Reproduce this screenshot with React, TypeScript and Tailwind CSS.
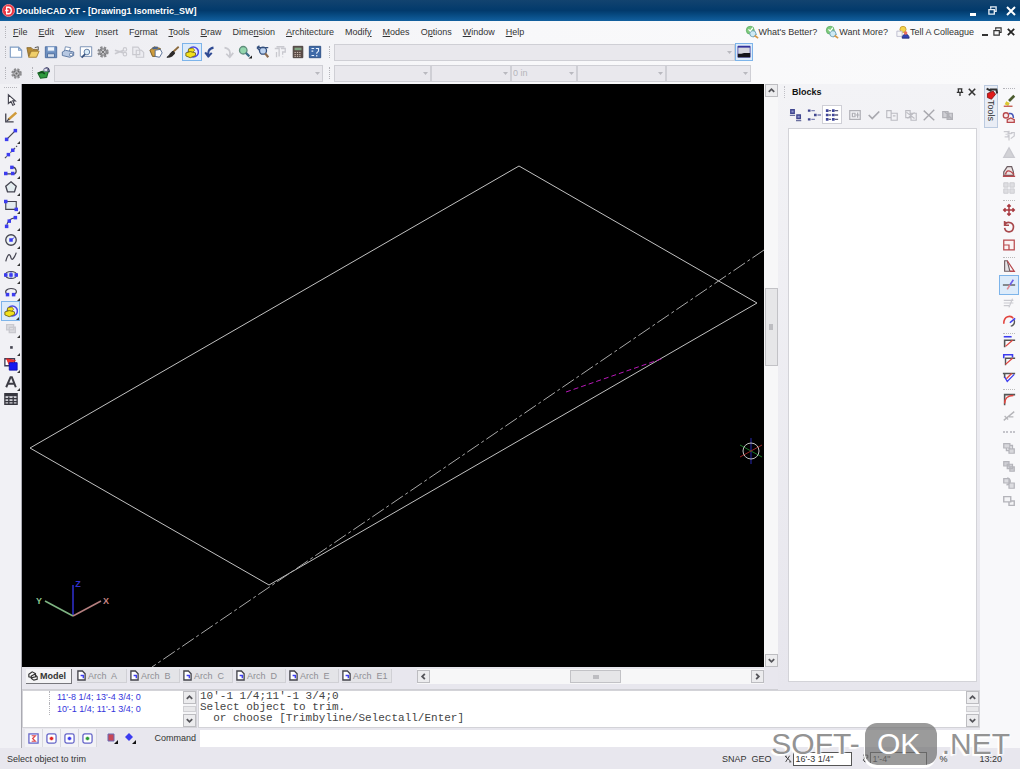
import type { ReactNode } from "react";

const MENUS = [
  ["", "F", "ile"],
  ["", "E", "dit"],
  ["", "V", "iew"],
  ["", "I", "nsert"],
  ["F", "o", "rmat"],
  ["", "T", "ools"],
  ["", "D", "raw"],
  ["Dime", "n", "sion"],
  ["", "A", "rchitecture"],
  ["Modif", "y", ""],
  ["", "M", "odes"],
  ["O", "p", "tions"],
  ["", "W", "indow"],
  ["", "H", "elp"],
];

const BLUE = "#3c3cf0";
const DARK = "#444450";
const PALE = "#c9c9cf";
const RED = "#b8484c";

const node = (x: number, y: number) => <rect x={x - 2} y={y - 2} width="4" height="4" fill={BLUE} stroke="none" />;

// all glyphs are drawn on a 16x16 grid, fill none and stroke by default
const ICONS: Record<string, ReactNode> = {
  new: <path d="M1.500 2.500H11L14.500 6V14H1.500ZM11 2.500V6H14.500" fill="#fff" stroke="#7f9dc4" strokeWidth="1.300" />,
  open: (
    <>
      <path d="M1 3H6L8 5H13V8H5L3 13Z" fill="#b58a34" stroke="#8a6a2e" />
      <path d="M3 14L6 7H15L12 14Z" fill="#f0cf6a" stroke="#a07a30" />
      <path d="M10 3L14 2V6" stroke="#444" />
    </>
  ),
  save: (
    <>
      <path d="M1.500 2H14.500V14.500H1.500Z" fill="#6c8fc0" stroke="#496a9d" />
      <path d="M4 2H12V7H4Z" fill="#eef4fc" stroke="#7d9bc8" />
      <path d="M4 10H12V14H4Z" fill="#d5deeb" stroke="#496a9d" />
    </>
  ),
  print: (
    <>
      <path d="M5 2L11 3L9 8L4 7Z" fill="#fff" stroke="#6d87ad" />
      <path d="M1.500 8L5 6L14.500 8V12L10 14L1.500 12Z" fill="#b7c8e2" stroke="#53709c" />
      <circle cx="11.500" cy="11" r="1.800" fill="#fff" stroke="#53709c" />
    </>
  ),
  preview: (
    <>
      <path d="M1.500 2H14.500V13H1.500Z" fill="#fff" stroke="#6d87ad" />
      <circle cx="9" cy="8" r="3.200" fill="#d9ecf8" stroke="#53709c" />
      <path d="M7 10.500L3 14.500" stroke="#39537f" strokeWidth="2" />
    </>
  ),
  gear: (
    <>
      <circle cx="8" cy="8" r="5" fill="#a9a9ac" stroke="#8b8b8e" strokeWidth="3" strokeDasharray="2.400 1.600" />
      <path d="M5 5L11 11M11 5L5 11" stroke="#6c6c70" strokeWidth="1.500" />
      <circle cx="8" cy="8" r="1.800" fill="#666" stroke="#d5d5d8" />
    </>
  ),
  cut: (
    <>
      <path d="M1 6L11 9M1 10L11 6" stroke={PALE} strokeWidth="1.800" />
      <circle cx="12.500" cy="10.500" r="2" stroke={PALE} strokeWidth="1.300" />
      <circle cx="12.500" cy="5" r="2" stroke={PALE} strokeWidth="1.300" />
    </>
  ),
  copy: <path d="M2 2.500H8L10 5V11H2ZM6 6H12L14.500 8.500V14H6Z" fill="#ececf1" stroke={PALE} strokeWidth="1.300" />,
  paste: (
    <>
      <path d="M1 6L6 2L13 4L11 13L4 13Z" fill="#cf9c3c" stroke="#6e5523" />
      <path d="M7 6L13 5L15 9L12 14L7 13Z" fill="#fff" stroke="#4a648e" />
      <path d="M4 4L10 3" stroke="#4a648e" strokeWidth="2.500" />
    </>
  ),
  brush: (
    <>
      <path d="M8 8L14.500 2" stroke="#8b6a3e" strokeWidth="2" />
      <path d="M1 14C4 13 4 9 8 7L10 9C8 13 5 14 1 14Z" fill="#2d2a2a" stroke="#222" />
    </>
  ),
  erase: (
    <>
      <circle cx="9.500" cy="8" r="5.800" fill="#e8eaff" stroke="#4a46e6" strokeWidth="1.700" />
      <path d="M4 4.500L9 3.500L11 6L9 8.500L4 8Z" fill="#f3e11c" stroke="#857a1c" />
      <path d="M1 9L6 7.500L12 9V12L6 14.500L1 12.500Z" fill="#f3e11c" stroke="#6b6218" />
    </>
  ),
  undo: <path d="M6.500 14C5 9 6 4 12 3M2.500 8.500L6 13L10 9" stroke="#2f4a93" strokeWidth="2.400" />,
  redo: <path d="M4 3C10 4 11 8 10 13M6 10L10 14L14 9" stroke={PALE} strokeWidth="2" />,
  zoom: (
    <>
      <circle cx="6" cy="6" r="4.300" fill="#93d6ad" stroke="#5f8d7b" strokeWidth="1.500" />
      <path d="M9 9L13 13" stroke="#3b6e86" strokeWidth="2.500" />
      <path d="M12 15.500H16V12Z" fill="#222" stroke="none" />
    </>
  ),
  zoomPrev: (
    <>
      <circle cx="8" cy="6.500" r="4" fill="#bcd2f0" stroke="#35507e" strokeWidth="1.500" />
      <path d="M10.500 9.500L14 14" stroke="#8c6a4e" strokeWidth="2.500" />
      <path d="M1 3H14M1 3L4 1M1 3L4 6" stroke="#35507e" strokeWidth="1.500" />
    </>
  ),
  help: <path d="M2 4H7V13M4 8V14M9 4H14V8H11V11M11 13V14M4 2H13" stroke={PALE} strokeWidth="1.500" />,
  calc: (
    <>
      <path d="M2.500 1.500H13.500V14.500H2.500Z" fill="#5b4a46" stroke="#443a38" />
      <path d="M4 3H12V6H4Z" fill="#7fa281" stroke="none" />
      <path d="M4 8.500H12M4 11H12M4 13H12" stroke="#e3d8cc" strokeDasharray="1.500 1.200" />
    </>
  ),
  palette: (
    <>
      <path d="M1.500 1.500H14.500V14.500H1.500Z" fill="#3f6aa8" stroke="#274a80" />
      <path d="M4 4H7M4 7H6M4 12H7M9 4H12V7L10 9V10M10 11.500V13" stroke="#e8f1fd" strokeWidth="1.300" />
    </>
  ),
  layers: (
    <>
      <path d="M1 8L6 6H13L11 13L4 14Z" fill="#2e9a3e" stroke="#1d6b2b" strokeWidth="1.300" />
      <path d="M2 8L6 7L9 9" stroke="#124a1c" strokeWidth="2" />
      <path d="M8 5C9 1 14 1 14 7" stroke="#33345e" strokeWidth="1.500" />
      <path d="M8 3H12V6H8Z" fill="#f2f2f6" stroke="#77779a" />
    </>
  ),
  screen: (
    <>
      <path d="M1 1.500H15V14H1Z" fill="#d6d7de" stroke="#4f4fae" />
      <path d="M1 2H15" stroke="#33339c" strokeWidth="2" />
      <path d="M1 14V10H5L8 9H15V14Z" fill="#15151a" stroke="none" />
    </>
  ),
  arrow: <path d="M5 2V12L8 9.500L10 14L12 13L10 9H13Z" fill="#fff" stroke={DARK} strokeWidth="1.300" />,
  sketch: (
    <>
      <path d="M2 4V13.500H11" stroke={DARK} strokeWidth="1.500" />
      <path d="M5 11L14 3" stroke="#d09b3a" strokeWidth="3" />
      <path d="M3 13L6 10" stroke={DARK} strokeWidth="1.500" />
    </>
  ),
  line: <><path d="M3 13L13 3" stroke={DARK} strokeWidth="1.500" />{node(3, 13)}{node(13, 3)}</>,
  cline: <><path d="M1 15L15 1" stroke={DARK} strokeWidth="1.200" strokeDasharray="3 1.500" />{node(5, 11)}{node(10, 6)}</>,
  pline: <><path d="M2 12.500H11C16 12 14 4 9 5" stroke={DARK} strokeWidth="1.500" />{node(2, 12)}{node(10, 12)}{node(9, 5)}</>,
  polygon: <path d="M8 2L14 7L12 13.500H4L2 7Z" fill="#e3ecef" stroke={DARK} strokeWidth="1.500" />,
  rect: <><path d="M2 4H14V13H2Z" fill="#e3ecef" stroke={DARK} strokeWidth="1.300" />{node(2, 4)}{node(14, 13)}</>,
  arc: <><path d="M3 14C3 8 7 4 13 3" stroke={DARK} strokeWidth="1.300" />{node(3, 13)}{node(6, 7)}{node(13, 3)}</>,
  circle: <><circle cx="8" cy="8" r="6" fill="#edf3f5" stroke={DARK} strokeWidth="1.500" />{node(8, 8)}<path d="M8 8L12 5" stroke={BLUE} /></>,
  spline: <path d="M2 13C5 2 7 5 8 9S12 9 14 3" stroke={DARK} strokeWidth="1.400" />,
  ellipse: <><ellipse cx="8" cy="8" rx="6.500" ry="4" fill="#e3ecef" stroke={DARK} strokeWidth="1.300" />{node(2, 8)}{node(8, 8)}{node(14, 8)}<path d="M8 4V12" stroke={BLUE} /></>,
  earc: <><path d="M4 11C-1 7 4 4 8 4C15 4 16 9 11 11" stroke={DARK} strokeWidth="1.400" />{node(4, 11)}{node(11, 11)}</>,
  block: <path d="M3 3H11V9H3ZM6 6H13V12H6Z" fill="#dedee2" stroke={PALE} strokeWidth="1.500" />,
  point: <path d="M7 7H10V10H7Z" fill={DARK} stroke="none" />,
  fill: (
    <>
      <path d="M1 2H12V10H1Z" fill="#fff" stroke="#3d3d57" strokeWidth="1.500" />
      <path d="M3 2L13 4L6 9Z" fill="#f03a34" stroke="#e02020" />
      <path d="M6 6.500H15V15H6Z" fill="#1818f0" stroke="#1010b0" />
    </>
  ),
  text: <path d="M2.500 14L7.500 2.500H9L13.500 14M4.500 10H12" stroke="#3d3d45" strokeWidth="2.300" />,
  table: (
    <>
      <path d="M1 2H15V14H1Z" fill="#d0d0d6" stroke="#36363e" strokeWidth="1.500" />
      <path d="M1 3.500H15" stroke="#36363e" strokeWidth="2.500" />
      <path d="M1 7.500H15M1 11H15M5.500 5V14M10.500 5V14" stroke="#36363e" strokeWidth="1.500" />
    </>
  ),
  pencil: (
    <>
      <path d="M8 8L14 2" stroke="#4a5a2e" strokeWidth="3" />
      <path d="M4 10L8 12" stroke="#dbc832" strokeWidth="4" />
      <path d="M2 14H12" stroke="#c25548" strokeWidth="1.500" />
    </>
  ),
  copyObj: (
    <>
      <circle cx="4.500" cy="5" r="3" fill="#f9eaea" stroke={RED} strokeWidth="1.500" />
      <path d="M6 13V10L10 8L14 10V13Z" fill="#f4dada" stroke={RED} strokeWidth="1.500" />
      <path d="M8 3C12 2 13 5 13 8" stroke="#4758b8" strokeWidth="1.800" />
    </>
  ),
  mirrorOff: <path d="M2 3H7V9H3M8 2V13M10 4H14V8L10 11M4 6L12 5" stroke={PALE} strokeWidth="1.400" />,
  mirror: <path d="M8 2L14 13H2Z" fill="#d2d2d6" stroke={PALE} strokeWidth="1.500" />,
  offset: (
    <>
      <path d="M2 13V9L6 3H11L13 9V13Z" fill="#ece4e4" stroke="#6d5d62" strokeWidth="1.400" />
      <path d="M4 12C5 7 8 6 14 12M1 14H15" stroke={RED} strokeWidth="1.600" />
    </>
  ),
  array: <path d="M2 2H7V7H2ZM9 2H14V7H9ZM2 9H7V14H2ZM9 9H14V14H9Z" fill="#dedee2" stroke={PALE} />,
  move: <path d="M8 1.500V14.500M1.500 8H14.500M6 4L8 2L10 4M6 12L8 14L10 12M4 6L2 8L4 10M12 6L14 8L12 10" stroke="#a8383e" strokeWidth="1.700" />,
  rotate: <path d="M3 5C7 0 14 4 13 9C12 15 4 15 3 9M3 1V6H8" stroke="#a8484c" strokeWidth="1.900" />,
  scale: <path d="M2 2.500H14V13.500H2ZM2 8H8V13.500" fill="#fbf3f3" stroke={RED} strokeWidth="1.400" />,
  stretch: (
    <>
      <path d="M3 14V2H6L9 14Z" fill="#e6e3e6" stroke="#6d5d62" strokeWidth="1.300" />
      <path d="M6 2L14 14H9" stroke={RED} strokeWidth="1.500" />
    </>
  ),
  trim: (
    <>
      <path d="M1 8H15" stroke="#555" strokeWidth="1.500" />
      <path d="M13 2L9 8" stroke="#6a5ce8" strokeWidth="1.800" />
      <path d="M9 8L6 13" stroke="#e28a92" strokeWidth="1.800" />
    </>
  ),
  extendOff: <path d="M2 5H13M2 8H13M2 11H8M12 3L8 13" stroke={PALE} strokeWidth="1.400" />,
  breakLine: (
    <>
      <path d="M2 11C2 2 10 1 13 5" stroke="#e2453f" strokeWidth="1.800" />
      <path d="M15 5L9 10" stroke={BLUE} strokeWidth="1.800" />
      <path d="M14 7C15 11 13 13 10 14" stroke="#555" strokeWidth="1.500" />
    </>
  ),
  chamfer1: (
    <>
      <path d="M2 2H11" stroke={BLUE} strokeWidth="1.800" />
      <path d="M3 14V6H15" stroke="#555" strokeWidth="1.800" />
      <path d="M4 13L12 6" stroke="#e2453f" strokeWidth="1.500" />
    </>
  ),
  chamfer2: (
    <>
      <path d="M2 6V2H12V5" stroke={BLUE} strokeWidth="1.800" />
      <path d="M4 14V6H15" stroke="#555" strokeWidth="1.600" />
      <path d="M4 13L12 6" stroke="#e2453f" strokeWidth="1.500" />
    </>
  ),
  chamfer3: (
    <>
      <path d="M1 4H15M3 4V9" stroke="#555" strokeWidth="1.800" />
      <path d="M3 8L6 13L14 5" stroke={BLUE} strokeWidth="1.500" />
      <path d="M5 10L11 4" stroke="#e2453f" strokeWidth="1.500" />
    </>
  ),
  fillet: (
    <>
      <path d="M3 15V3H15" stroke="#555" strokeWidth="1.800" />
      <path d="M3 13C3 7 7 4 13 4" stroke="#e2453f" strokeWidth="1.700" />
    </>
  ),
  explode: <path d="M2 13L14 3M3 8L7 12M8 9H13" stroke="#b5b5b9" strokeWidth="1.500" />,
  orderA: <path d="M2 3H9V8H2ZM8 9H14V14H8ZM5 8V11H8M9 5H12V9" fill="#d8d8dc" stroke="#b4b4ba" strokeWidth="1.400" />,
  orderB: <path d="M2 3H8V8H2ZM6 6H12V11H6ZM9 9H14V14H9Z" fill="#cfcfd4" stroke="#b4b4ba" strokeWidth="1.400" />,
  orderC: <path d="M6 2A4 4 0 1 1 5 10M8 8H14V14H8ZM2 3H8V8H2Z" fill="#dcdce0" stroke="#b4b4ba" strokeWidth="1.400" />,
  orderD: <path d="M2 3H10V9H2ZM8 9V13H14V8H10" fill="#f4f4f6" stroke="#b4b4ba" strokeWidth="1.600" />,
  bigIcons: (
    <>
      <path d="M2 2H6V6H2ZM9 8H13V12H9Z" fill="#8f95cc" stroke="#40468f" strokeWidth="1.500" />
      <path d="M1 8.500H7M8 14.500H14" stroke="#6a6f9f" strokeWidth="1.300" />
    </>
  ),
  smallIcons: (
    <>
      <path d="M1 3H4M8 8H11M1 13H4" stroke="#40468f" strokeWidth="2.800" />
      <path d="M5 3H9M12 8H16M5 13H9" stroke="#7d82b4" strokeWidth="1.500" />
    </>
  ),
  details: (
    <>
      <path d="M1 3H4M1 8H4M1 13H4M8 3H11M8 8H11M8 13H11" stroke="#3e449a" strokeWidth="3" />
      <path d="M4 3H7M4 8H7M4 13H7M11 3H15M11 8H15M11 13H15" stroke="#5d5f80" strokeWidth="1.500" />
    </>
  ),
  insertBlk: <path d="M2 3H14V13H2ZM5 6H8V10H5ZM11 5V11M9 8H13" stroke="#b0b0b6" strokeWidth="1.400" />,
  check: <path d="M2 8L6 12L14 4" stroke="#a8a8ae" strokeWidth="2" />,
  copyBlk: <path d="M2 3H7V11H2ZM7 6H14V14H7ZM9 9H12" stroke="#bcbcc2" strokeWidth="1.300" />,
  editBlk: <path d="M2 3V11H7V3ZM8 6H14V14H8ZM3 5L12 12M4 12L12 5" stroke="#bcbcc2" strokeWidth="1.300" />,
  remove: <path d="M2 3L14 14M14 2L2 14" stroke="#a8a8ae" strokeWidth="1.600" />,
  purge: <path d="M2 4H8V11H2ZM7 6H13V13H7ZM4 4L12 12M9 5V12" fill="#d0d0d5" stroke="#b0b0b6" strokeWidth="1.400" />,
  toolbox: (
    <>
      <path d="M2 2L8 5M6 3L14 3L15 8" stroke="#333" strokeWidth="2.500" />
      <path d="M3 8L10 5L13 9L8 15L3 13Z" fill="#e01a1a" stroke="#7d1414" />
    </>
  ),
  bubble: (
    <>
      <path d="M9 5L13 11L10 14" fill="#b8dbe8" stroke="#6b9fb5" />
      <circle cx="6" cy="6" r="4.500" fill="#7fcb7c" stroke="#5fae68" />
      <circle cx="9" cy="10" r="3.500" fill="#cfeaf4" stroke="#6b9fb5" />
      <path d="M11 12L15 15" stroke="#d99a46" strokeWidth="2" />
      <path d="M4 5L6 7L9 3" stroke="#fff" strokeWidth="1.500" />
    </>
  ),
  people: (
    <>
      <circle cx="8" cy="5" r="3.500" fill="#f3d34a" stroke="#c89c30" />
      <path d="M1 7H7V13H1Z" fill="#f6f6f8" stroke="#b9b9cc" />
      <path d="M7 15C7 9 15 9 15 15Z" fill="#3343b4" stroke="#222c77" />
      <circle cx="11" cy="9" r="2" fill="#e96b5c" stroke="none" />
    </>
  ),
  coord: <path d="M2 4L12 13M10 3L3 14M2 4H5M9 14H13" stroke="#333" strokeWidth="1.600" />,
  angle: <path d="M4 2H12V7L6 8V4M6 8L4 11L8 14M9 10L6 14" stroke="#333" strokeWidth="1.600" />,
};

function Icon({ name, className = "size-[14px]" }: { name: string; className?: string }) {
  return (
    <svg viewBox="0 0 16 16" fill="none" className={`shrink-0 ${className}`} aria-hidden="true">
      {ICONS[name]}
    </svg>
  );
}

function ToolButton({ name, active = false, flyout = false }: { name: string; active?: boolean; flyout?: boolean }) {
  return (
    <button
      aria-label={name}
      className={`relative flex min-h-0 min-w-0 flex-1 items-center justify-center ${
        active ? "border border-[#7db4ea] bg-[#dcebfa]" : ""
      }`}
    >
      <Icon name={name} />
      {flyout && (
        <svg viewBox="0 0 3 3" className="absolute right-0 bottom-0 size-[3px]">
          <path d="M0 3H3V0Z" fill="#333" />
        </svg>
      )}
    </button>
  );
}

const Grip = () => <div className="h-3 w-px border-l border-dotted border-[#b4b4ba]" />;

function Combo({ label, value = "", className }: { label: string; value?: string; className: string }) {
  return (
    <div className={`relative h-[17px] ${className}`}>
      <select
        aria-label={label}
        disabled
        className="block h-full w-full appearance-none border border-[#cfcfd5] bg-[#e9e8ed] px-px text-[9px] leading-3 text-[#b5b5bb] opacity-100"
      >
        <option>{value}</option>
      </select>
      <svg viewBox="0 0 5 3" className="pointer-events-none absolute top-[7px] right-[3px] h-[3px] w-[5px]">
        <path d="M0 0H5L2.500 3Z" fill="#b9b9bf" />
      </svg>
    </div>
  );
}

const CHEVRONS = {
  up: "M2 6.500L5 3.500L8 6.500",
  down: "M2 3.500L5 6.500L8 3.500",
  left: "M6.500 2L3.500 5L6.500 8",
  right: "M3.500 2L6.500 5L3.500 8",
};

function ScrollButton({ dir }: { dir: keyof typeof CHEVRONS }) {
  return (
    <button
      aria-label={`Scroll ${dir}`}
      className="flex size-[13px] shrink-0 items-center justify-center border border-[#bdbdc1] bg-[#ececee]"
    >
      <svg viewBox="0 0 10 10" fill="none" className="size-[9px]">
        <path d={CHEVRONS[dir]} stroke="#55555a" strokeWidth="2" />
      </svg>
    </button>
  );
}

function TitleBar() {
  return (
    <header className="flex h-[21px] shrink-0 items-center bg-linear-to-b from-[#12436f] via-[#023a6c] to-[#12609f] px-[2px] text-white">
      <svg viewBox="0 0 14 14" fill="none" className="size-[13px]">
        <circle cx="7" cy="7" r="6.500" fill="#ea3542" stroke="#f58a90" />
        <path d="M5 3.500V10.500H7C11 10.500 11 3.500 7 3.500ZM3.500 7H7" stroke="#fff" strokeWidth="1.400" />
      </svg>
      <h1 className="ml-px text-[9px] font-bold">DoubleCAD XT - [Drawing1 Isometric_SW]</h1>
      <div className="ml-auto flex gap-[5px]">
        <button aria-label="Minimize" className="flex size-[14px] items-end justify-center pb-[2px]">
          <span className="h-[3px] w-[6px] bg-white" />
        </button>
        <button aria-label="Restore" className="flex size-[14px] items-center justify-center">
          <svg viewBox="0 0 10 10" fill="none" className="size-[9px]" stroke="#e6edf5">
            <path d="M3 3V1H9V6H7M1 4H7V9H1Z" strokeWidth="1.500" />
          </svg>
        </button>
        <button aria-label="Close" className="flex size-[14px] items-center justify-center">
          <svg viewBox="0 0 10 10" fill="none" className="size-[10px]" stroke="#fff">
            <path d="M1 1L9 9M9 1L1 9" strokeWidth="2" />
          </svg>
        </button>
      </div>
    </header>
  );
}

function MenuBar() {
  return (
    <div className="flex h-[21px] shrink-0 items-center bg-linear-to-r from-[#ececf1] via-[#f8f8fa] to-[#fafafb] pr-[5px] pl-[5px]">
      <Grip />
      <nav className="ml-[7px] flex gap-[11px]">
        {MENUS.map(([before, key, after]) => (
          <button key={before + key + after}>
            {before}
            <u>{key}</u>
            {after}
          </button>
        ))}
      </nav>
      <div className="ml-auto flex items-center gap-2">
        <a href="#better" className="flex items-center"><Icon name="bubble" />What's Better?</a>
        <a href="#more" className="flex items-center"><Icon name="bubble" />Want More?</a>
        <a href="#tell" className="flex items-center"><Icon name="people" />Tell A Colleague</a>
      </div>
      <div className="ml-[6px] flex items-center gap-[3px]">
        <button aria-label="Minimize drawing" className="flex size-[10px] items-end justify-center pb-px">
          <span className="h-[2px] w-[6px] bg-[#333]" />
        </button>
        <button aria-label="Restore drawing">
          <svg viewBox="0 0 10 10" fill="none" className="size-[9px]" stroke="#333">
            <path d="M3 3V1H9V6H7M1 4H7V9H1Z" strokeWidth="1.300" />
          </svg>
        </button>
        <button aria-label="Close drawing" className="pl-[2px]">
          <svg viewBox="0 0 10 10" fill="none" className="size-[8px]" stroke="#222">
            <path d="M1 1L9 9M9 1L1 9" strokeWidth="2.200" />
          </svg>
        </button>
      </div>
    </div>
  );
}

const STANDARD = [
  "new", "open", "save", "print", "preview", "gear", "cut", "copy", "paste",
  "brush", "erase", "undo", "redo", "zoom", "zoomPrev", "help", "calc", "palette",
];

function Toolbars() {
  return (
    <div className="shrink-0 bg-linear-to-r from-[#ececf1] via-[#f8f8fa] to-[#fafafb]">
      <div className="flex h-5 items-center pl-[5px]">
        <Grip />
        <div className="ml-px flex h-[18px] w-[317px]">
          {STANDARD.map((name) => <ToolButton key={name} name={name} active={name === "erase"} />)}
        </div>
        <div className="ml-[5px]"><Grip /></div>
        <Combo label="Style" className="ml-1 w-[401px]" />
        <button aria-label="Screen" className="flex size-[18px] items-center justify-center border border-[#7db4ea] bg-[#dcebfa]">
          <Icon name="screen" />
        </button>
      </div>
      <div className="flex h-[22px] items-center pl-[5px]">
        <Grip />
        <button aria-label="Settings" className="ml-1"><Icon name="gear" className="size-[13px]" /></button>
        <div className="ml-[9px]"><Grip /></div>
        <button aria-label="Layers" className="ml-1"><Icon name="layers" /></button>
        <Combo label="Layer" className="ml-[3px] w-[269px]" />
        <div className="ml-[6px]"><Grip /></div>
        <div className="ml-1 flex">
          <Combo label="Color" className="w-[97px]" />
          <Combo label="Linetype" className="w-[80px]" />
          <Combo label="Lineweight" value="0 in" className="w-[66px]" />
          <Combo label="Plot style" className="w-[89px]" />
          <Combo label="Brush style" className="w-[85px]" />
        </div>
      </div>
    </div>
  );
}

const DRAW = [
  "arrow", "sketch", "line", "cline", "pline", "polygon", "rect", "arc", "circle",
  "spline", "ellipse", "earc", "erase", "block", "point", "fill", "text", "table",
];
const PLAIN = ["arrow", "sketch", "table"];

const MODIFY = [
  ["pencil", "copyObj", "mirrorOff", "mirror", "offset", "array"],
  ["move", "rotate", "scale"],
  ["stretch", "trim", "extendOff", "breakLine"],
  ["chamfer1", "chamfer2", "chamfer3"],
  ["fillet", "explode"],
];
const ORDER = ["orderA", "orderB", "orderC", "orderD"];

function Drawing() {
  return (
    <svg
      viewBox="0 0 742 583"
      preserveAspectRatio="xMinYMin slice"
      fill="none"
      className="min-h-0 w-full flex-1 bg-black"
      role="img"
      aria-label="Drawing area"
    >
      <path d="M497 82L735 219L247 501L8 364Z" stroke="#c0c0c0" />
      <path d="M742 166L130 583" stroke="#a8a8a8" strokeDasharray="14 3 3 3" />
      <path d="M544 308L642 274" stroke="#b818b8" strokeDasharray="5 3" />
      <path d="M51 532V501" stroke="#3030d0" strokeWidth="1.500" />
      <path d="M51 532L23 517" stroke="#7fb583" strokeWidth="1.500" />
      <path d="M51 532L79 517" stroke="#b57f7f" strokeWidth="1.500" />
      <g fontSize="9" fontWeight="bold" textAnchor="middle">
        <text x="56" y="503" fill="#3030d0">Z</text>
        <text x="17" y="520" fill="#8cc48f">Y</text>
        <text x="84" y="520" fill="#c88484">X</text>
      </g>
      <path d="M729 354V380" stroke="#2828b0" />
      <path d="M718 361L740 373" stroke="#1d7a2a" />
      <path d="M718 373L740 361" stroke="#9c2626" />
      <circle cx="729" cy="367" r="8" stroke="#c0c0c0" />
    </svg>
  );
}

function SheetTabs() {
  return (
    <div className="flex h-[23px] shrink-0 items-start border-b border-[#cfcfd4] pt-[2px] pr-[14px]">
      <div className="flex flex-1 gap-[3px] pl-1">
        <button className="mr-[2px] flex h-[15px] w-[46px] items-center gap-[2px] border-r border-b border-[#77777c] bg-[#f4f4f6] pl-[2px] font-bold">
          <svg viewBox="0 0 12 12" fill="none" className="size-[10px]" stroke="#333">
            <path d="M1 4L5 1L9 3V7L5 8L1 7ZM4 6L8 4L11 7V10L7 11L4 9Z" strokeWidth="1.400" />
          </svg>
          Model
        </button>
        {["A", "B", "C", "D", "E", "E1"].map((sheet) => (
          <button
            key={sheet}
            className="flex h-[14px] w-[50px] items-center gap-[2px] border-r border-b border-[#d0d0d5] bg-[#e4e4e8] text-[#8f8f95]"
          >
            <svg viewBox="0 0 10 12" fill="none" className="h-[11px] w-[9px] shrink-0">
              <path d="M1 1H6L9 4V11H1Z" fill="#fff" stroke="#44444c" strokeWidth="1.500" />
              <path d="M4 6H7V9" stroke={BLUE} strokeWidth="1.500" />
            </svg>
            <span className="whitespace-pre">Arch  {sheet}</span>
          </button>
        ))}
      </div>
      <div className="flex h-[15px] w-[347px] items-center bg-[#f7f7f8]">
        <ScrollButton dir="left" />
        <div className="flex flex-1 justify-center">
          <div className="ml-[10px] flex h-[13px] w-[51px] items-center justify-center border border-[#c2c2c6] bg-[#e6e6e8]">
            <span className="h-[4px] w-[6px] bg-[#bdbdc1]" />
          </div>
        </div>
        <ScrollButton dir="right" />
      </div>
    </div>
  );
}

const BLOCK_TOOLS = ["insertBlk", "check", "copyBlk", "editBlk", "remove", "purge"];

function BlocksPanel() {
  return (
    <aside className="flex w-[202px] shrink-0 flex-col bg-linear-to-b from-[#f3f3f6] to-[#e7e6ed]">
      <div className="flex h-4 items-center pr-1 pl-[6px]">
        <div className="h-3 w-2 border-l border-dotted border-[#c0c0c6]" />
        <h2 className="font-bold text-[#111]">Blocks</h2>
        <button aria-label="Pin" className="ml-auto">
          <svg viewBox="0 0 10 10" fill="none" className="size-[8px]" stroke="#333">
            <path d="M2 1H8M3 1V5M7 1V5M1 5.500H9M5 6V10" strokeWidth="1.600" />
          </svg>
        </button>
        <button aria-label="Close panel" className="ml-1">
          <svg viewBox="0 0 10 10" fill="none" className="size-[8px]" stroke="#333">
            <path d="M1 1L9 9M9 1L1 9" strokeWidth="2" />
          </svg>
        </button>
      </div>
      <div className="mt-[5px] flex h-[19px] items-center pl-[9px]">
        <div className="flex h-full w-[55px]">
          <ToolButton name="bigIcons" />
          <ToolButton name="smallIcons" />
          <button aria-label="Details" className="flex flex-1 items-center justify-center border border-[#cfcfd6] bg-white">
            <Icon name="details" />
          </button>
        </div>
        <div className="ml-1 flex h-full w-[111px]">
          {BLOCK_TOOLS.map((name) => <ToolButton key={name} name={name} />)}
        </div>
      </div>
      <div className="mt-1 mr-[3px] mb-[8px] ml-[10px] flex-1 border border-[#d3d3d8] bg-white" />
    </aside>
  );
}

function MiniScroll() {
  return (
    <div className="flex w-[13px] shrink-0 flex-col justify-between bg-[#f5f5f7]">
      <ScrollButton dir="up" />
      <div className="h-[6px] border border-[#d0d0d4] bg-[#e8e8ea]" />
      <ScrollButton dir="down" />
    </div>
  );
}

function CommandArea() {
  return (
    <div className="shrink-0">
      <div className="flex h-[38px] gap-px">
        <div className="flex w-[175px] border border-[#d3d3d8] bg-white">
          <ul className="ml-[26px] flex-1 leading-[12px] whitespace-nowrap text-[#3434dc]">
            <li className="flex items-center gap-1">
              <span className="h-3 w-1 border-l border-dotted border-[#b4b4ba]" />
              11'-8 1/4; 13'-4 3/4; 0
            </li>
            <li className="flex items-center gap-1">
              <span className="h-3 w-1 border-l border-dotted border-[#b4b4ba]" />
              10'-1 1/4; 11'-1 3/4; 0
            </li>
          </ul>
          <MiniScroll />
        </div>
        <div className="flex flex-1 border border-[#d3d3d8] bg-white">
          <pre className="flex-1 pl-px font-['Liberation_Mono',monospace] text-[11px] leading-[11px] text-[#444]">
            {"10'-1 1/4;11'-1 3/4;0\nSelect object to trim.\n  or choose [Trimbyline/Selectall/Enter]"}
          </pre>
          <MiniScroll />
        </div>
      </div>
      <div className="flex h-5 items-center">
        <div className="flex w-[178px] items-center pl-[3px]">
          {["#e0484c", "#e02020", BLUE, "#2a9a34"].map((color, i) => (
            <button key={color} aria-label={`Snap mode ${i + 1}`} className="flex size-[18px] items-center justify-center border-r border-[#d9d9df] bg-[#f2f2f6]">
              <svg viewBox="0 0 12 12" fill="none" className="size-[11px]">
                <rect x="1" y="1" width="10" height="10" rx={i ? 2 : 0} fill="#fff" stroke="#6464c8" strokeWidth="1.400" />
                <path d={i ? "M4 6H8M6 4V8" : "M4 3H8L5 6L8 9H4"} stroke={color} strokeWidth={i ? 2 : 1.3} />
              </svg>
            </button>
          ))}
          <button aria-label="Layers list" className="ml-[6px] flex size-[18px] items-center justify-center">
            <svg viewBox="0 0 12 12" fill="none" className="size-[12px]">
              <path d="M2 2H8V9H2Z" fill="#c84858" stroke="#6a6ab4" />
              <path d="M8 12H12V8Z" fill="#111" />
            </svg>
          </button>
          <button aria-label="Snap point" className="flex size-[18px] items-center justify-center">
            <svg viewBox="0 0 12 12" className="size-[12px]">
              <path d="M5 1L9 5L5 9L1 5Z" fill={BLUE} />
              <path d="M8 12H12V8Z" fill="#111" />
            </svg>
          </button>
          <label htmlFor="command" className="ml-auto pr-1">Command</label>
        </div>
        <input id="command" className="h-[17px] min-w-0 flex-1 bg-white px-1 outline-none" />
      </div>
    </div>
  );
}

function StatusBar() {
  return (
    <footer className="flex h-[21px] shrink-0 items-center pr-[18px] pl-[7px]">
      <span>Select object to trim</span>
      <span className="ml-auto">SNAP</span>
      <span className="ml-[5px]">GEO</span>
      <label className="ml-[13px] flex items-center">
        <Icon name="coord" className="size-[9px]" />
        <input aria-label="X coordinate" defaultValue={`16'-3 1/4"`} className="h-[14px] w-[59px] border border-[#555] bg-white px-px" />
      </label>
      <label className="ml-[9px] flex items-center">
        <Icon name="angle" className="size-[9px]" />
        <input aria-label="Y coordinate" defaultValue={`1'-4"`} className="h-[14px] w-[57px] border border-[#555] bg-white px-px" />
      </label>
      <span className="ml-[12px]">%</span>
      <span className="ml-[32px]">13:20</span>
    </footer>
  );
}

function Watermark() {
  return (
    <div className="pointer-events-none absolute right-[10px] bottom-[4px] flex h-[42px] items-center text-[30px] text-[#939393] [text-shadow:-1px_1px_1px_#fff,1px_1px_2px_#fff,-2px_2px_1px_#fff]">
      <span>SOFT-</span>
      <span className="mx-[5px] flex h-[42px] w-[72px] items-center justify-center rounded-xl bg-[#707070]/70 pr-1 text-white shadow-[-1px_3px_0_#fff] [text-shadow:none]">
        OK
      </span>
      <span>.NET</span>
    </div>
  );
}

export default function App() {
  return (
    <div className="relative flex h-screen flex-col overflow-hidden bg-[#e8e7ee] font-['Liberation_Sans',Arial,sans-serif] text-[9px] leading-3 text-[#333]">
      <TitleBar />
      <MenuBar />
      <Toolbars />
      <main className="flex min-h-0 flex-1">
        <div className="w-[22px] shrink-0 border-r border-[#aaaab2] bg-[#f1f1f5] pt-[3px] pr-px pl-px">
          <div className="mx-[3px] mb-[3px] border-t border-dotted border-[#b4b4ba]" />
          <div className="flex h-[317px] flex-col">
            {DRAW.map((name) => (
              <ToolButton key={name} name={name} active={name === "erase"} flyout={!PLAIN.includes(name)} />
            ))}
          </div>
        </div>
        <div className="flex min-w-0 flex-1 flex-col">
          <div className="flex min-h-0 flex-1">
            <div className="flex min-w-0 flex-1 flex-col">
              <div className="flex min-h-0 flex-1">
                <Drawing />
                <div className="flex w-[14px] shrink-0 flex-col items-center bg-[#f7f7f8]">
                  <ScrollButton dir="up" />
                  <div className="flex flex-1 flex-col justify-center">
                    <div className="mb-[97px] flex h-[78px] w-[13px] items-center justify-center border border-[#c2c2c6] bg-[#e6e6e8]">
                      <span className="h-[6px] w-[4px] bg-[#bdbdc1]" />
                    </div>
                  </div>
                  <ScrollButton dir="down" />
                </div>
              </div>
              <SheetTabs />
            </div>
            <BlocksPanel />
          </div>
          <CommandArea />
        </div>
        <div className="flex shrink-0 bg-[#f8f8fa]">
          <div className="w-[19px] pt-px pl-[4px]">
            <button className="flex h-[43px] w-[14px] flex-col items-center border border-[#bccbe0] bg-[#e9edf5] pt-px">
              <Icon name="toolbox" className="size-[13px]" />
              <span className="[writing-mode:vertical-rl]">Tools</span>
            </button>
          </div>
          <div className="w-[21px] pt-[4px] pr-px">
            <div className="mx-1 mb-[3px] border-t border-dotted border-[#b4b4ba]" />
            <div className="flex h-[333px] flex-col">
              {MODIFY.map((group, i) => (
                <div key={i} className="contents">
                  {i > 0 && <div className="mx-1 h-1 border-b border-dotted border-[#bbb]" />}
                  {group.map((name) => <ToolButton key={name} name={name} active={name === "trim"} />)}
                </div>
              ))}
            </div>
            <div className="mx-1 my-[6px] border-t-2 border-dotted border-[#c4c4ca]" />
            <div className="flex h-[71px] flex-col">
              {ORDER.map((name) => <ToolButton key={name} name={name} />)}
            </div>
          </div>
        </div>
      </main>
      <StatusBar />
      <Watermark />
    </div>
  );
}
